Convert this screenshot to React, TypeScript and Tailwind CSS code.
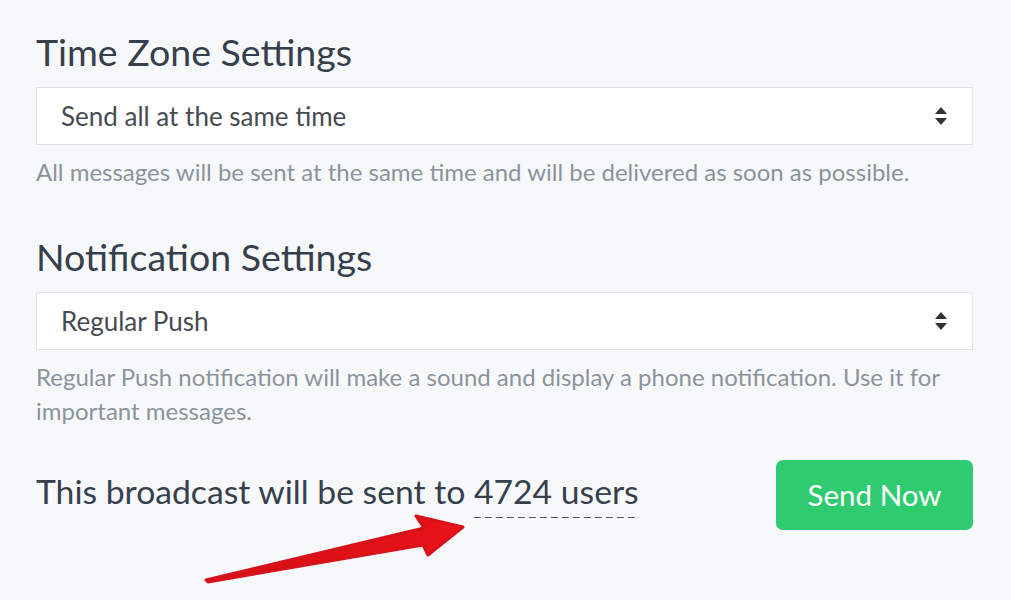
import React from "react";

function Chevrons() {
  return (
    <svg width="14" height="20" viewBox="0 0 14 20" className="shrink-0">
      <path d="M7 1 L13 8 H1 Z" fill="#2f3338" />
      <path d="M7 19 L13 12 H1 Z" fill="#2f3338" />
    </svg>
  );
}

function Select({ value }: { value: string }) {
  return (
    <div className="h-[58px] bg-white border border-[#dfe3e8] flex items-center justify-between pl-[24px] pr-[24px]">
      <span className="text-[26px] text-[#464b52]">{value}</span>
      <Chevrons />
    </div>
  );
}

export default function App() {
  return (
    <div
      className="relative w-[1011px] h-[600px] bg-[#f7f8fa] overflow-hidden"
      style={{ fontFamily: "Lato, 'Open Sans', sans-serif" }}
    >
      <div className="px-[36px] pt-[32px] w-[1009px]">
        <h2 className="text-[37.5px] leading-[40px] text-[#36404d]">Time Zone Settings</h2>
        <div className="mt-[15px]">
          <Select value="Send all at the same time" />
        </div>
        <p className="mt-[10px] text-[24px] leading-[34px] text-[#8b949c]">
          All messages will be sent at the same time and will be delivered as soon as possible.
        </p>

        <h2 className="mt-[48px] text-[37.5px] leading-[40px] text-[#36404d]">Notification Settings</h2>
        <div className="mt-[15px]">
          <Select value="Regular Push" />
        </div>
        <p className="mt-[10px] text-[24px] leading-[34px] text-[#8b949c]">
          Regular Push notification will make a sound and display a phone notification. Use it for important messages.
        </p>

        <div className="mt-[32px] h-[70px] flex items-center justify-between">
          <p className="pb-[8px] text-[33.7px] leading-[36px] text-[#36404d]">
            This broadcast will be sent to{" "}
            <span className="pb-[7px] bg-[linear-gradient(to_right,#4a5563_64%,transparent_64%)] bg-[length:11px_1px] bg-repeat-x bg-bottom">
              4724 users
            </span>
          </p>
          <button className="w-[197px] h-[70px] rounded-[7px] bg-[#2ecc6f] text-white text-[29.5px]">
            Send Now
          </button>
        </div>
      </div>

      <svg
        className="absolute left-0 top-0 pointer-events-none"
        width="1011"
        height="600"
        viewBox="0 0 1011 600"
      >
        <defs>
          <linearGradient id="ar" x1="0" y1="0" x2="1" y2="0">
            <stop offset="0" stopColor="#d40e14" />
            <stop offset="1" stopColor="#e8141a" />
          </linearGradient>
        </defs>
        <path
          d="M206 580 L424 528 L416 516 L463 527 L428 555 L423 545 L208 582 Z"
          fill="url(#ar)"
          stroke="#d8121a"
          strokeWidth="3"
          strokeLinejoin="round"
        />
      </svg>
    </div>
  );
}
